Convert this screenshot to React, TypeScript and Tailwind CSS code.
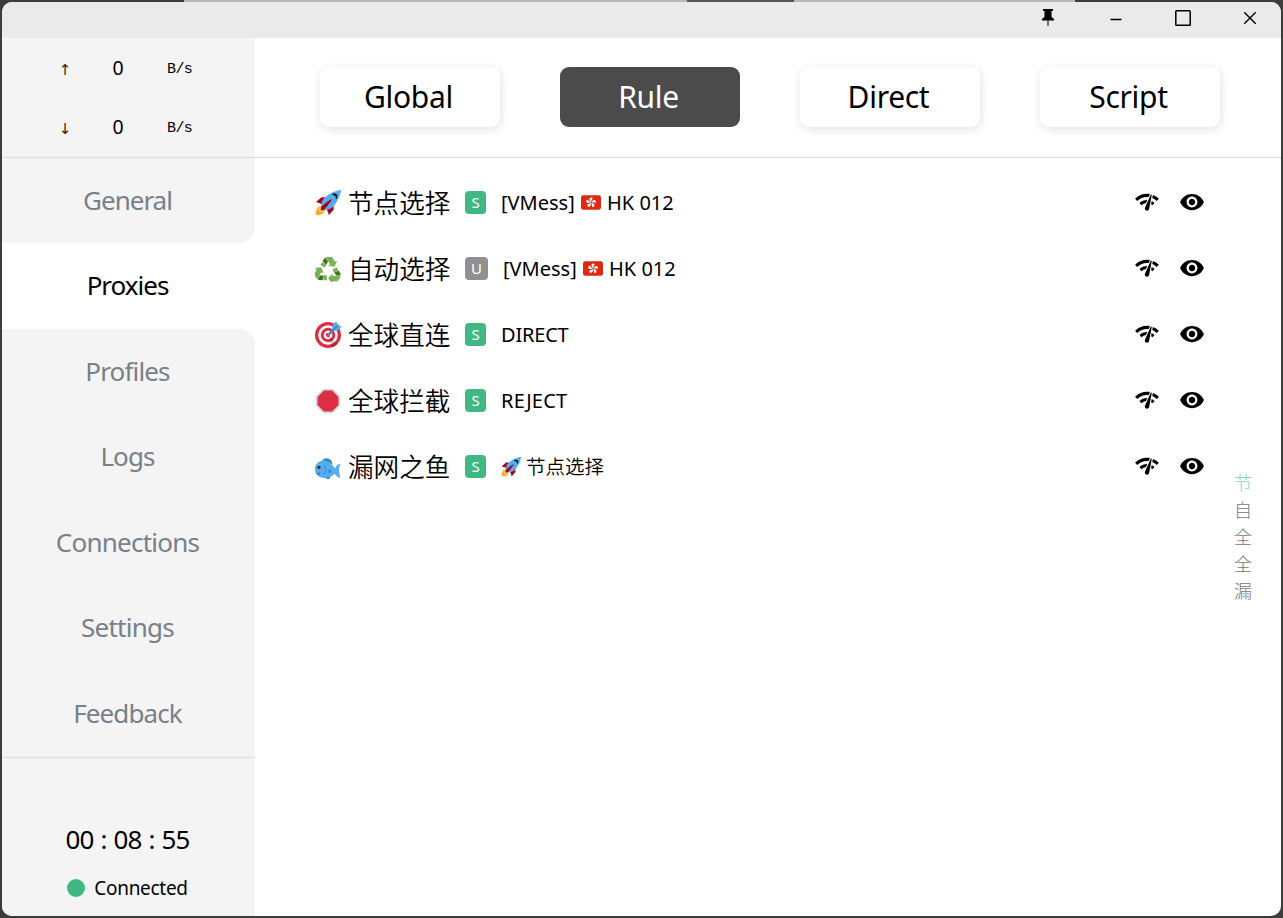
import { MdNetworkCheck, MdVisibility } from "react-icons/md";

function Rocket({ className }: { className: string }) {
  return (
    <svg viewBox="0 0 36 36" className={className}>
      <path fill="#A0041E" d="M1 17l8-7 16 1 1 16-7 8s.001-5.999-6-12-12-6-12-6z" />
      <path fill="#FFAC33" d="M.973 35s-.036-7.979 2.985-11S15 21.187 15 21.187 14.999 29 11.999 32c-3 3-11.026 3-11.026 3z" />
      <circle fill="#FFCC4D" cx="8.999" cy="27" r="4" />
      <path fill="#55ACEE" d="M35.999 0s-10 0-22 10c-6 5-6 14-4 16s11 2 16-4c10-12 10-22 10-22z" />
      <path d="M26.999 5c-1.623 0-3.013.971-3.641 2.36.502-.227 1.055-.36 1.641-.36 2.209 0 4 1.791 4 4 0 .586-.133 1.139-.359 1.64 1.389-.627 2.359-2.017 2.359-3.64 0-2.209-1.791-4-4-4z" />
      <path fill="#A0041E" d="M8 28s0-4 1-5 13.001-10.999 14-10-9.001 13-10.001 14S8 28 8 28z" />
    </svg>
  );
}

function Recycle({ className }: { className: string }) {
  return (
    <svg viewBox="0 0 36 36" className={className}>
      {[0, 120, 240].map((a) => (
        <g key={a} transform={`rotate(${a} 18 20.500)`}>
          <path fill="#3E721D" d="M13.500 2.500l-3 5 5 4.500 2.500-4.500-2.500-4z" />
          <path fill="#77B255" d="M10 8.500l-2.500 4 6 3.500 2.500-4.200z" />
          <path fill="#77B255" d="M13.500 1.500H22c1.500 0 2.500 1 3 2l2.500 4.500 3-1.500-3.500 8.500-9-1.500 3-2L16.500 4.500c-.8-2-1.500-3-3-3z" />
        </g>
      ))}
    </svg>
  );
}

function Target({ className }: { className: string }) {
  return (
    <svg viewBox="0 0 36 36" className={className}>
      <circle fill="#DD2E44" cx="18" cy="18" r="18" />
      <circle fill="#FFF" cx="18" cy="18" r="13.5" />
      <circle fill="#DD2E44" cx="18" cy="18" r="10" />
      <circle fill="#FFF" cx="18" cy="18" r="6" />
      <circle fill="#DD2E44" cx="18" cy="18" r="3" />
      <path opacity=".2" d="M18.24 18.282l13.144 11.754s-2.647 3.376-7.89 5.109L17.579 18.42l.661-.138z" />
      <path fill="#FFAC33" d="M18.294 19c-.255 0-.509-.097-.704-.292-.389-.389-.389-1.018 0-1.407l.563-.563c.389-.389 1.018-.389 1.408 0 .388.389.388 1.018 0 1.407l-.564.563c-.194.195-.448.292-.703.292z" />
      <path fill="#55ACEE" d="M24.016 6.981c-.403 2.079 0 4.691 0 4.691l7.054-7.388c.291-1.454-.528-3.932-1.718-4.238-1.19-.306-4.079.803-5.336 6.935zm5.003 5.003c-2.079.403-4.691 0-4.691 0l7.388-7.054c1.454-.291 3.932.528 4.238 1.718.306 1.19-.803 4.079-6.935 5.336z" />
      <path fill="#3A87C2" d="M32.798 4.485L21.176 17.587c-.362.362-1.673.882-2.51.046-.836-.836-.419-2.08-.057-2.443L31.815 3.501s.676-.635 1.159-.152-.176 1.136-.176 1.136z" />
    </svg>
  );
}

function StopSign({ className }: { className: string }) {
  return (
    <svg viewBox="0 0 36 36" className={className}>
      <path fill="#D1D8DE" d="M24.5 1h-13L1 11.5v13L11.500 35h13L35 24.500v-13z" />
      <path fill="#DD2E44" d="M23.700 3.500H12.300L3.500 12.300v11.400l8.800 8.800h11.400l8.800-8.800V12.300z" />
    </svg>
  );
}

function Fish({ className }: { className: string }) {
  return (
    <svg viewBox="0 0 36 36" className={className}>
      <path fill="#3B88C3" d="M10 9.500c1-4 7-5 11-2 2 1.500 3 4 3 7zM13 30l8-2c1 3 0 6-2 7-3 0-5-2-6-5z" />
      <path fill="#55ACEE" d="M0 21C0 14 5 9 12 9c7 0 11 5 15.500 11 2-4 4.500-6 8-7-.5 3-2.500 5.500-2.500 8 0 4 1.500 7 2 12-4-1-6-3-8-6-3 4-8 6-14 6C5 33 0 28 0 21z" />
      <path fill="#269" d="M1.500 26.500c2 .8 4.500.3 6-1.200-.3 2.800-3.500 4-6 1.200z" />
      <path fill="none" stroke="#3B88C3" strokeWidth="1.200" d="M12.500 15c3 4 3 9 0 13" />
      <circle fill="#292F33" cx="5.500" cy="18.500" r="2.300" />
      <path fill="#3B88C3" d="M17.500 21c3 0 5 1 5 2.500s-2 3-4 3c1-2 .5-4-1-5.500z" />
    </svg>
  );
}

function HongKong() {
  return (
    <svg viewBox="0 0 36 26" className="h-[15px] w-5">
      <rect width="36" height="26" rx="4" fill="#DE2910" />
      {[0, 72, 144, 216, 288].map((a) => (
        <path key={a} fill="#FFF" transform={`rotate(${a} 18 13)`} d="M18 12.500C14.200 9.500 14.500 4 18.500 4c2.500 0 3 2.500 1 4.300-1.500 1.400-1.200 2.700-1.500 4.200z" />
      ))}
    </svg>
  );
}

const emoji = "size-[26px] shrink-0";

const groups = [
  { icon: <Rocket className={emoji} />, name: "节点选择", kind: "S", now: "hk" },
  { icon: <Recycle className={emoji} />, name: "自动选择", kind: "U", now: "hk" },
  { icon: <Target className={emoji} />, name: "全球直连", kind: "S", now: "DIRECT" },
  { icon: <StopSign className={emoji} />, name: "全球拦截", kind: "S", now: "REJECT" },
  { icon: <Fish className={emoji} />, name: "漏网之鱼", kind: "S", now: "node" },
];

const menu = [
  { label: "General", style: "h-[85px] rounded-br-2xl bg-[#f4f4f4] text-[#78808a] tracking-[-1px]" },
  { label: "Proxies", style: "h-[86px] bg-white text-black tracking-[-1px]" },
  { label: "Profiles", style: "h-[85px] rounded-tr-2xl bg-[#f4f4f4] text-[#78808a] tracking-[-0.85px]" },
  { label: "Logs", style: "h-[86px] bg-[#f4f4f4] text-[#78808a] tracking-[-0.9px]" },
  { label: "Connections", style: "h-[85px] bg-[#f4f4f4] text-[#78808a] tracking-[-0.75px]" },
  { label: "Settings", style: "h-[86px] bg-[#f4f4f4] text-[#78808a] tracking-[-0.75px]" },
  { label: "Feedback", style: "h-[86px] bg-[#f4f4f4] text-[#78808a] tracking-[-0.9px]" },
];

const modes = ["Global", "Rule", "Direct", "Script"];

function Speed({ arrow }: { arrow: string }) {
  return (
    <div className="flex h-[59px] items-center">
      <span className="ml-[53px] w-5 pt-[3px] text-center font-['DejaVu_Sans'] text-[15px] text-[#3a2600]">{arrow}</span>
      <span className="ml-[33px] w-5 pb-[2px] text-center text-[19.500px]">0</span>
      <span className="ml-[39px] pt-1 font-['Liberation_Mono'] text-[15px] tracking-[-0.6px]">B/s</span>
    </div>
  );
}

function TitleBar() {
  return (
    <header className="flex h-9 items-center justify-end bg-[#eaeaea] pb-1">
      <svg viewBox="0 0 14 18" className="mr-[55px] h-[18px] w-[14px]">
        <path d="M2 0h10v2h-1.500v6L13 10v1.500H7.500V17h-1V11.500H1V10l2.500-2V2H2z" />
      </svg>
      <svg viewBox="0 0 12 16" className="mr-[53px] h-4 w-3"><path d="M.5 9.500h11" stroke="#000" strokeWidth="1.500" /></svg>
      <svg viewBox="0 0 16 16" className="mr-[53px] size-4"><rect x=".8" y=".8" width="14.400" height="14.400" rx=".8" fill="none" stroke="#000" strokeWidth="1.500" /></svg>
      <svg viewBox="0 0 12 12" className="mr-[25px] size-3"><path d="M.3.3l11.400 11.400M11.700.3L.3 11.700" stroke="#000" strokeWidth="1.400" /></svg>
    </header>
  );
}

export default function App() {
  return (
    <div className="flex h-[918px] w-[1283px] flex-col bg-[#3c3c3c] font-['Noto_Sans','Noto_Sans_CJK_SC',sans-serif] text-black">
      <div className="flex h-[2px] shrink-0">
        <div className="w-[184px]" />
        <div className="w-[503px] bg-[#b8b8b8]" />
        <div className="w-[107px] bg-[#565656]" />
        <div className="w-[281px] bg-[#b8b8b8]" />
      </div>
      <div className="mx-[2px] h-[914px] overflow-hidden rounded-[10px] bg-white">
        <TitleBar />
        <div className="flex h-[878px]">
          <aside className="flex w-[253px] shrink-0 flex-col">
            <div className="h-[120px] border-b border-[#dcdcdc] bg-[#f4f4f4] pt-px">
              <Speed arrow="↑" />
              <Speed arrow="↓" />
            </div>
            <nav>
              {menu.map((m) => (
                <div key={m.label} className={`flex items-center justify-center pr-[2px] pb-px text-[26px] ${m.style}`}>{m.label}</div>
              ))}
            </nav>
            <div className="flex flex-1 flex-col items-center border-t border-[#dcdcdc] bg-[#f4f4f4] pt-[63px]">
              <div className="h-9 pr-[2px] text-[26px] leading-9 tracking-[-0.9px] [word-spacing:1.1px]">00 : 08 : 55</div>
              <div className="mt-[19px] flex h-6 items-center gap-[9px] pr-[2px]">
                <span className="size-[18px] rounded-full bg-[#41b883]" />
                <span className="text-[19px] tracking-[-0.3px]">Connected</span>
              </div>
            </div>
          </aside>
          <main className="min-w-0 flex-1">
            <div className="flex h-[120px] gap-[60px] border-b border-[#dcdcdc] pt-[29px] pl-[65px]">
              {modes.map((m) => (
                <button key={m} className={`h-[60px] w-[180px] rounded-[9px] pr-[3px] pb-px text-[30px] tracking-[-0.3px] ${m === "Rule" ? "bg-[#4b4b4b] text-white" : "bg-white shadow-[1px_2px_10px_rgba(0,0,0,0.12)]"}`}>{m}</button>
              ))}
            </div>
            <div className="flex">
              <div className="w-[951px] pt-3 pl-[60px]">
                {groups.map((g) => (
                  <div key={g.name} className="flex h-[66px] items-center pb-px">
                    {g.icon}
                    <span className="ml-[7px] w-[103px] pt-[3px] text-[25.600px] font-[350] whitespace-nowrap">{g.name}</span>
                    <span className={`ml-[14px] flex h-[23px] items-center justify-center rounded-[4px] text-[15px] text-white ${g.kind === "S" ? "w-[21px] bg-[#41b883]" : "w-[23px] bg-[#909090]"}`}>{g.kind}</span>
                    <div className="ml-[15px] flex items-center text-[20px] whitespace-nowrap">
                      {g.now === "hk" && (<><span className="mr-[5px] w-[75px]">[VMess]</span><HongKong /><span className="ml-[6px]">HK 012</span></>)}
                      {g.now === "node" && (<><Rocket className="size-5" /><span className="ml-[5px] pt-px text-[19.500px] font-[350]">节点选择</span></>)}
                      {g.now === "DIRECT" && <span className="tracking-[-0.2px]">DIRECT</span>}
                      {g.now === "REJECT" && <span className="tracking-[0.2px]">REJECT</span>}
                    </div>
                    <MdNetworkCheck className="mb-px ml-auto size-[26px]" />
                    <MdVisibility className="mr-px mb-px ml-[19px] size-[26px]" />
                  </div>
                ))}
              </div>
              <div className="ml-[28px] flex flex-col pt-[312px] text-[18px] font-light text-[#777]">
                {["节", "自", "全", "全", "漏"].map((c, i) => (
                  <span key={i} className={`h-[27px] leading-[27px] ${i === 0 ? "text-[#8dd5b5]" : ""}`}>{c}</span>
                ))}
              </div>
            </div>
          </main>
        </div>
      </div>
    </div>
  );
}
